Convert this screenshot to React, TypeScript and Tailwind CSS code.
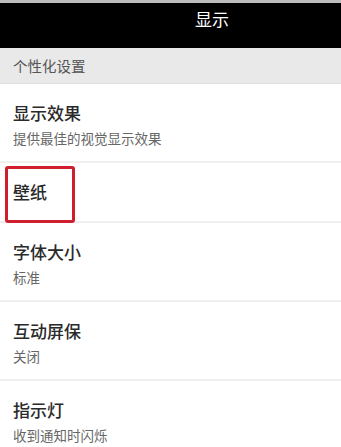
const FONT = "font-['Noto_Sans_CJK_SC','Noto_Sans',sans-serif]";

type Item = { title: string; desc?: string; marked?: boolean };

const ITEMS: Item[] = [
  { title: "显示效果", desc: "提供最佳的视觉显示效果" },
  { title: "壁纸", marked: true },
  { title: "字体大小", desc: "标准" },
  { title: "互动屏保", desc: "关闭" },
  { title: "指示灯", desc: "收到通知时闪烁" },
];

function SettingRow({ item }: { item: Item }) {
  if (!item.desc) {
    return (
      <div className="relative flex h-[60px] items-center border-b-2 border-[#efefef] px-[13px]">
        <p className="text-[17px] font-medium leading-[24px] text-[#2a2a2a]">{item.title}</p>
        {item.marked && (
          <div className="absolute left-[5px] top-[3px] h-[57px] w-[70px] rounded-[3px] border-[3px] border-[#cf1f2e]" />
        )}
      </div>
    );
  }
  return (
    <div className="border-b-2 border-[#efefef] px-[13px] pt-[17px] pb-[14px]">
      <p className="text-[17px] font-medium leading-[24px] text-[#2a2a2a]">{item.title}</p>
      <p className="mt-[4px] text-[13.5px] leading-[18px] text-[#666]">{item.desc}</p>
    </div>
  );
}

export default function App() {
  return (
    <div className={`h-[447px] w-[341px] overflow-hidden bg-white ${FONT}`}>
      <div className="h-[3px] bg-[#bcbcbc]" />
      <div className="h-[45px] bg-black pl-[195px] pt-[4px]">
        <span className="text-[17px] leading-[24px] text-white">显示</span>
      </div>
      <div className="flex h-[36px] items-center border-b border-[#e0e0e0] bg-[#e9e9e9] px-[13px]">
        <span className="text-[14.5px] text-[#555]">个性化设置</span>
      </div>
      {ITEMS.map((item) => (
        <SettingRow key={item.title} item={item} />
      ))}
    </div>
  );
}
